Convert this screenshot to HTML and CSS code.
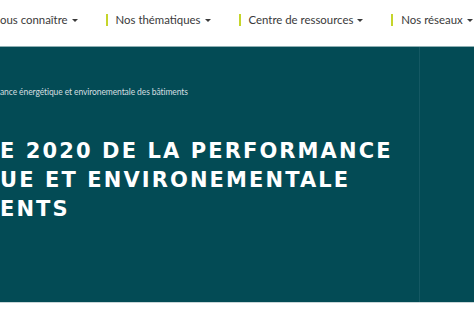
FILE: index.html
```html
<!DOCTYPE html>
<html lang="fr">
<head>
    <meta charset="UTF-8">
    <meta name="viewport" content="width=device-width, initial-scale=1.0">
    <title>Bilan RE 2020</title>
    <link rel="stylesheet" href="styles.css">
</head>
<body>
    <nav class="topnav">
        <a class="nav-item first" href="#">ous connaître <span class="caret"></span></a>
        <a class="nav-item" href="#">Nos thématiques <span class="caret"></span></a>
        <a class="nav-item" href="#">Centre de ressources <span class="caret"></span></a>
        <a class="nav-item" href="#">Nos réseaux <span class="caret"></span></a>
    </nav>
    <section class="hero">
        <div class="hero-main">
            <p class="breadcrumb">ance énergétique et environementale des bâtiments</p>
            <h1 class="hero-title">E 2020 DE LA PERFORMANCE<br>UE ET ENVIRONEMENTALE<br>ENTS</h1>
        </div>
        <div class="hero-side"></div>
    </section>
</body>
</html>
```

FILE: styles.css
```css
body {
    margin: 0;
    background: #fff;
    font-family: Lato, "Open Sans", sans-serif;
    overflow: hidden;
}
.topnav {
    display: flex;
    align-items: flex-start;
    height: 46px;
    padding-top: 14px;
    box-sizing: border-box;
}
.nav-item {
    display: flex;
    align-items: center;
    gap: 4px;
    color: #3a3a3a;
    text-decoration: none;
    font-size: 11.4px;
    white-space: nowrap;
    padding: 0 8px;
    border-left: 2px solid #c5d52b;
    line-height: 12px;
    margin-left: 20px;
}
.nav-item.first {
    border-left: none;
    padding-left: 0;
    margin-left: 0;
}
.caret {
    width: 0;
    height: 0;
    border-left: 3px solid transparent;
    border-right: 3px solid transparent;
    border-top: 3px solid #3a3a3a;
}
.hero {
    display: flex;
    height: 255px;
    background: #034b55;
    border-top: 1px solid #8fb0b4;
    border-bottom: 1px solid #c9d6d8;
}
.hero-main {
    width: 419px;
    border-right: 1px solid #145863;
    padding-top: 40px;
}
.hero-side {
    flex: 1;
}
.breadcrumb {
    margin: 0;
    color: #d5dfe0;
    font-size: 8.5px;
    letter-spacing: -0.1px;
    white-space: nowrap;
}
.hero-title {
    margin: 40px 0 0;
    color: #fff;
    font-family: "DejaVu Sans", sans-serif;
    font-weight: bold;
    font-size: 21px;
    line-height: 29px;
    letter-spacing: 2.1px;
    white-space: nowrap;
}
```
